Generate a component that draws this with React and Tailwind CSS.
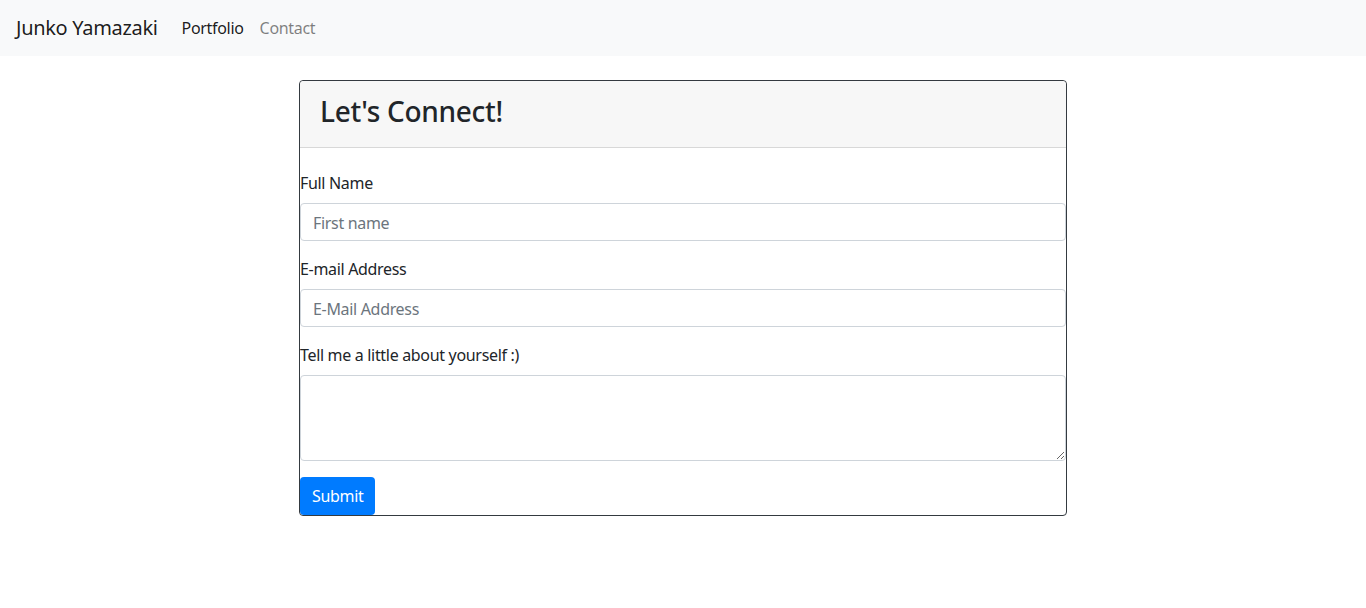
import React from 'react';

// 導覽列
const Navbar = () => (
  <nav className="flex items-center h-14 px-4 bg-[#f8f9fa]">
    <a href="#" className="text-xl leading-[30px] text-black/90 mr-4">Junko Yamazaki</a>
    <a href="#" className="px-2 py-2 text-base text-black/90">Portfolio</a>
    <a href="#" className="px-2 py-2 text-base text-black/50">Contact</a>
  </nav>
);

// 表單欄位
const Field = ({ label, children }) => (
  <div className="mb-4">
    <label className="block mb-2 leading-6">{label}</label>
    {children}
  </div>
);

const inputClass =
  'block w-full h-[38px] px-3 pt-[7px] pb-[5px] text-base text-[#495057] tracking-[-0.02em] border border-[#ced4da] rounded bg-white placeholder:text-[#6c757d] outline-none';

const App = () => {
  return (
    <div className="min-h-[608px] bg-white text-[#212529] tracking-[-0.02em] font-['Noto_Sans','Open_Sans',sans-serif]">
      <Navbar />

      <div className="w-[768px] mx-auto mt-6 border border-[#343a40] rounded">
        <div className="px-5 pt-[14px] pb-[10px] bg-[#f7f7f7] border-b border-black/[0.125] rounded-t">
          <h3 className="text-[28px] leading-[1.2] font-medium mb-2">Let's Connect!</h3>
        </div>

        <form className="pt-[23px]">
          <Field label="Full Name">
            <input type="text" placeholder="First name" className={inputClass} />
          </Field>
          <Field label="E-mail Address">
            <input type="email" placeholder="E-Mail Address" className={inputClass} />
          </Field>
          <Field label="Tell me a little about yourself :)">
            <textarea
              rows={3}
              className="block w-full h-[86px] px-3 py-1.5 text-base border border-[#ced4da] rounded bg-white outline-none"
            />
          </Field>
          <button type="submit" className="h-[38px] px-3 pt-px text-base text-white bg-[#007bff] rounded">
            Submit
          </button>
        </form>
      </div>
    </div>
  );
};

export default App;
